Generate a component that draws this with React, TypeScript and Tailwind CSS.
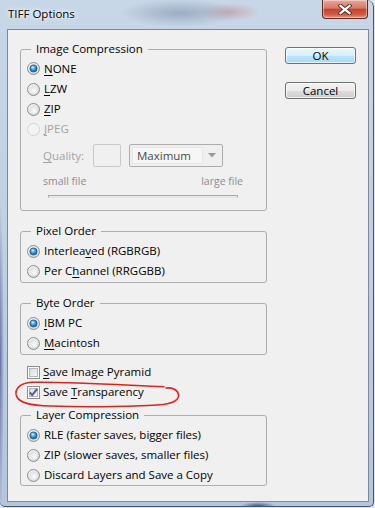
import React from "react";

const U = ({ c }: { c: string }) => (
  <span className="underline decoration-1 underline-offset-[2px]">{c}</span>
);

function Radio({ checked = false, disabled = false }: { checked?: boolean; disabled?: boolean }) {
  return (
    <svg width="13" height="13" viewBox="0 0 13 13" className="shrink-0 block">
      <circle cx="6.5" cy="6.5" r="6" fill={disabled ? "#f5f5f5" : "url(#rOuter)"} stroke={disabled ? "#d2d2d2" : "#8b8d8f"} />
      <circle cx="6.5" cy="6.5" r="4.2" fill={disabled ? "#f3f3f3" : "url(#rInner)"} />
      {checked && (
        <>
          <circle cx="6.5" cy="6.5" r="3.6" fill="url(#rDot)" stroke="#1d4f7c" strokeWidth="0.7" />
          <ellipse cx="5.7" cy="5.3" rx="1.5" ry="1.1" fill="#c4ecff" opacity="0.85" />
        </>
      )}
    </svg>
  );
}

function Check({ checked = false }: { checked?: boolean }) {
  return (
    <svg width="13" height="13" viewBox="0 0 13 13" className="shrink-0 block">
      <rect x="0.5" y="0.5" width="12" height="12" fill="#ffffff" stroke="#8e8f8f" />
      <rect x="2.5" y="2.5" width="8" height="8" fill="url(#cInner)" stroke="#b3b7bc" />
      {checked && (
        <path d="M2.8 6.4 L5.2 9.2 L10.2 2.8" fill="none" stroke="#4b5f8e" strokeWidth="1.9" strokeLinejoin="round" />
      )}
    </svg>
  );
}

function Opt({
  children,
  checked = false,
  disabled = false,
  tall = false,
}: {
  children: React.ReactNode;
  checked?: boolean;
  disabled?: boolean;
  tall?: boolean;
}) {
  return (
    <div className={`flex items-center gap-[4px] ${tall ? "h-[21px]" : "h-[20px]"} ${disabled ? "text-[#a3a3a3]" : ""}`}>
      <Radio checked={checked} disabled={disabled} />
      <span className="leading-[14px] whitespace-nowrap">{children}</span>
    </div>
  );
}

function Group({ title, children, className = "" }: { title: string; children: React.ReactNode; className?: string }) {
  return (
    <fieldset className={`w-[247px] border border-[#adadad] rounded-[3px] px-[6px] ${className}`}>
      <legend className="ml-[4px] px-[5px] leading-[14px] whitespace-nowrap">{title}</legend>
      {children}
    </fieldset>
  );
}

export default function App() {
  return (
    <div className="w-[375px] h-[508px] bg-[#dfe4ea] overflow-hidden font-['Open_Sans',sans-serif] text-[11.5px] text-black">
      <svg width="0" height="0" className="absolute">
        <defs>
          <radialGradient id="rOuter" cx="0.35" cy="0.3" r="0.8">
            <stop offset="0" stopColor="#ffffff" />
            <stop offset="1" stopColor="#cfd1d3" />
          </radialGradient>
          <radialGradient id="rInner" cx="0.6" cy="0.65" r="0.7">
            <stop offset="0" stopColor="#fbfbfb" />
            <stop offset="1" stopColor="#dcdddf" />
          </radialGradient>
          <radialGradient id="rDot" cx="0.45" cy="0.4" r="0.65">
            <stop offset="0" stopColor="#8fdcff" />
            <stop offset="0.55" stopColor="#2a8fd3" />
            <stop offset="1" stopColor="#0e4f8d" />
          </radialGradient>
          <linearGradient id="cInner" x1="0" y1="0" x2="1" y2="1">
            <stop offset="0" stopColor="#d6d8db" />
            <stop offset="1" stopColor="#f8f8f8" />
          </linearGradient>
        </defs>
      </svg>

      <div className="relative w-[374px] h-[507px] flex flex-col border-r border-b border-[#46566a] rounded-tr-[7px] rounded-br-[5px] rounded-bl-[5px] bg-[radial-gradient(ellipse_60px_14px_at_180px_13px,rgba(120,138,165,0.55),transparent),radial-gradient(ellipse_30px_9px_at_230px_12px,rgba(200,120,125,0.45),transparent),radial-gradient(ellipse_4px_160px_at_0px_360px,rgba(95,100,165,0.9),transparent),radial-gradient(ellipse_18px_4px_at_258px_506px,rgba(40,80,125,0.9),transparent),linear-gradient(#c8d7e7,#bfd0e2_50%,#b4c6db)]">
        {/* title bar */}
        <div className="relative h-[29px] flex items-center pl-[8px] shrink-0">
          <span className="leading-[16px] pb-[1px] [text-shadow:0_0_6px_#ffffff,0_0_3px_#ffffff]">TIFF Options</span>
          <div className="absolute right-[5px] top-0 w-[46px] h-[19px] rounded-b-[4px] border border-t-0 border-[#5d2a25] bg-[linear-gradient(#e6a698_0%,#d77a68_45%,#c4432f_52%,#cf5c42_80%,#e4937a_100%)] shadow-[inset_0_0_1px_1px_rgba(255,255,255,0.45)] flex items-center justify-center">
            <svg width="14" height="11" viewBox="0 0 14 11">
              <path d="M2.5 1.8 L11.5 9.2 M11.5 1.8 L2.5 9.2" stroke="#4a2520" strokeWidth="4" strokeLinecap="square" />
              <path d="M2.5 1.8 L11.5 9.2 M11.5 1.8 L2.5 9.2" stroke="#ffffff" strokeWidth="2.3" strokeLinecap="square" />
            </svg>
          </div>
        </div>

        {/* client area */}
        <div className="ml-[7px] mr-[4px] h-[473px] border border-[#7b8896] bg-[#f0f0f0] flex">
          {/* left column */}
          <div className="ml-[12px] pt-[12px] flex flex-col">
            <Group title="Image Compression" className="pt-[2px] pb-[12px]">
              <Opt checked tall>
                <U c="N" />ONE
              </Opt>
              <Opt>
                <U c="L" />ZW
              </Opt>
              <Opt>
                <U c="Z" />IP
              </Opt>
              <Opt disabled>
                <U c="J" />PEG
              </Opt>
              <div className="flex items-center mt-[5px] ml-[16px] h-[23px]">
                <span className="w-[50px] text-[#a3a3a3] leading-[14px]">
                  <U c="Q" />uality:
                </span>
                <div className="w-[28px] h-[23px] border border-[#c9c9c9] rounded-[2px] bg-[#f0f0f0]" />
                <div className="ml-[8px] w-[94px] h-[23px] border border-[#acacac] rounded-[2px] bg-[#efefef] flex items-center p-[2px]">
                  <div className="w-[71px] h-[17px] bg-[#f6f6f6] border border-[#e6e6e6] flex items-center pl-[4px] text-[#4a4a4a] leading-[14px]">
                    Maximum
                  </div>
                  <div className="flex-1 flex items-center justify-center">
                    <svg width="8" height="5" viewBox="0 0 8 5">
                      <path d="M0 0 L8 0 L4 4.5 Z" fill="#9a9a9a" />
                    </svg>
                  </div>
                </div>
              </div>
              <div className="mt-[8px] ml-[16px] w-[200px] h-[12px] flex justify-between items-center text-[10.5px] leading-[12px] text-[#8d8d8d]">
                <span>small file</span>
                <span>large file</span>
              </div>
              <div className="mt-[8px] ml-[21px] w-[190px] h-[3px] border border-[#a9a9a9] border-b-[#e6e6e6] bg-[#e8e8e8]" />
            </Group>

            <Group title="Pixel Order" className="mt-[13px] pt-[3px] pb-[1px]">
              <Opt checked>
                Interlea<U c="v" />ed (RGBRGB)
              </Opt>
              <Opt>
                Per C<U c="h" />annel (RRGGBB)
              </Opt>
            </Group>

            <Group title="Byte Order" className="mt-[13px] pt-[3px] pb-[1px]">
              <Opt checked>
                <U c="I" />BM PC
              </Opt>
              <Opt>
                <U c="M" />acintosh
              </Opt>
            </Group>

            <div className="mt-[7px] ml-[7px] flex flex-col">
              <div className="h-[20px] flex items-center gap-[3px]">
                <Check />
                <span className="leading-[14px]">
                  <U c="S" />ave Image Pyramid
                </span>
              </div>
              <div className="h-[20px] flex items-center gap-[3px]">
                <Check checked />
                <span className="leading-[14px]">
                  Save <U c="T" />ransparency
                </span>
              </div>
            </div>

            <Group title="Layer Compression" className="mt-[6px] pt-[3px] pb-0">
              <Opt checked>RLE (faster saves, bigger files)</Opt>
              <Opt>ZIP (slower saves, smaller files)</Opt>
              <Opt>Discard Layers and Save a Copy</Opt>
            </Group>
          </div>

          {/* right column: buttons */}
          <div className="ml-[18px] mt-[17px] flex flex-col gap-[18px]">
            <button className="w-[71px] h-[17px] rounded-[3px] border border-[#3c7fb1] bg-[linear-gradient(#eaf6fd_0%,#d9f0fc_50%,#bee6fd_51%,#a7d9f5_100%)] shadow-[inset_0_0_0_1px_rgba(255,255,255,0.7)] flex items-center justify-center leading-[14px] text-[11.5px]">
              OK
            </button>
            <button className="w-[71px] h-[17px] rounded-[3px] border border-[#707070] bg-[linear-gradient(#f2f2f2_0%,#ebebeb_50%,#dddddd_51%,#cfcfcf_100%)] shadow-[inset_0_0_0_1px_rgba(255,255,255,0.7)] flex items-center justify-center leading-[14px] text-[11.5px]">
              Cancel
            </button>
          </div>
        </div>

        {/* red hand-drawn ellipse annotation */}
        <svg className="absolute left-0 top-0 pointer-events-none" width="375" height="508" viewBox="0 0 375 508">
          <path
            d="M164 386.8 C 130 385.5, 70 381.5, 32 382.3 C 20 383, 14 389, 16.5 396 C 19 403, 30 405.5, 50 406 C 90 407.5, 140 406.5, 163 404.5 C 176 403, 181 398, 177.5 392 C 175 388.5, 170 387.5, 166 388"
            fill="none"
            stroke="#e3211b"
            strokeWidth="1.6"
            strokeLinecap="round"
          />
        </svg>
      </div>
    </div>
  );
}
